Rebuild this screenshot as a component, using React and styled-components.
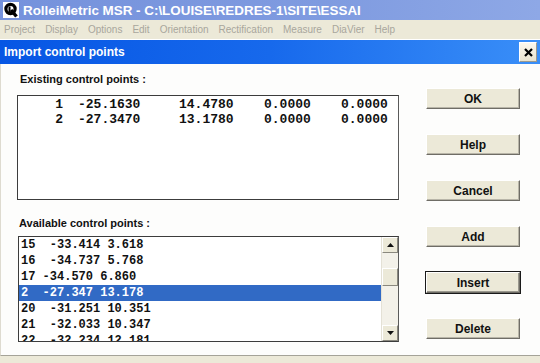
import styled, { createGlobalStyle } from 'styled-components'

const Global = createGlobalStyle`
	html, body {
		margin: 0;
		padding: 0;
		background: #ece9d8;
	}
	body {
		width: 540px;
		height: 363px;
		overflow: hidden;
	}
`

const Screen = styled.div`
	width: 540px;
	height: 363px;
	display: flex;
	flex-direction: column;
	font-family: "Liberation Sans", Arial, sans-serif;
	background: #ece9d8;
	overflow: hidden;
`

const AppTitle = styled.div`
	height: 20px;
	display: flex;
	align-items: center;
	gap: 4px;
	padding-left: 3px;
	background: linear-gradient(90deg, #7592dc 0%, #7f9be0 60%, #8ea8e6 100%);
	color: #fff;
	font-weight: bold;
	font-size: 13.4px;
`

const MenuBar = styled.div`
	height: 19px;
	display: flex;
	align-items: center;
	gap: 10px;
	padding-left: 4px;
	background: #ece9d8;
	color: #a8a69c;
	font-size: 10px;
`

const Gap = styled.div`
	height: 1px;
	background: #fff;
`

const DialogTitle = styled.div`
	height: 24px;
	display: flex;
	align-items: center;
	justify-content: space-between;
	padding: 0 3px 0 4px;
	background: linear-gradient(90deg, #0656e4 0%, #1769ec 50%, #3a8ff8 100%);
	color: #fff;
	font-weight: bold;
	font-size: 12px;
`

const CloseButton = styled.div`
	width: 16px;
	height: 18px;
	display: flex;
	align-items: center;
	justify-content: center;
	background: linear-gradient(180deg, #fbf8ee, #e9e3cf);
	border: 1px solid #fff;
	border-right-color: #9c9a8e;
	border-bottom-color: #9c9a8e;
`

const Body = styled.div`
	flex: 1;
	display: flex;
	background: #fdfdfc;
	border-left: 1px solid #dedbd0;
	border-bottom: 1px solid #a5a398;
	margin-bottom: 7px;
`

const LeftColumn = styled.div`
	width: 382px;
	margin-left: 16px;
	display: flex;
	flex-direction: column;
`

const Label = styled.div`
	height: 14px;
	line-height: 14px;
	margin-top: ${(p) => p.$top}px;
	padding-left: ${(p) => p.$indent}px;
	font-size: 11px;
	font-weight: bold;
	color: #111;
`

const ListBox = styled.div`
	box-sizing: border-box;
	height: ${(p) => p.$height}px;
	margin-top: ${(p) => p.$top}px;
	margin-left: ${(p) => p.$indent}px;
	border: 1px solid #3c3c3c;
	border-right-color: #5a5a5a;
	background: #fff;
	display: flex;
	overflow: hidden;
	font-family: "Liberation Mono", "Courier New", monospace;
	font-weight: bold;
	font-size: 12px;
	color: #111;
`

const Points = styled.div`
	padding-top: 1px;
	width: 100%;
`

const PointRow = styled.div`
	display: grid;
	grid-template-columns: 45px 101px 85px 77px 60px;
	height: 15px;
	line-height: 15px;
	font-size: 13px;
	white-space: pre;
`

const Cell = styled.span`
	text-align: ${(p) => (p.$right ? 'right' : 'left')};
	padding-left: ${(p) => (p.$right ? 0 : 15)}px;
`

const Entries = styled.div`
	flex: 1;
	display: flex;
	flex-direction: column;
`

const Entry = styled.div`
	height: 16px;
	line-height: 16px;
	padding-left: 2px;
	white-space: pre;
	background: ${(p) => (p.$selected ? '#316ac5' : 'transparent')};
	color: ${(p) => (p.$selected ? '#fff' : '#111')};
	flex-shrink: 0;
`

const ScrollBar = styled.div`
	width: 16px;
	display: flex;
	flex-direction: column;
	background: #f3f1e9;
	border-left: 1px solid #e4e1d6;
`

const ScrollArrow = styled.div`
	height: 16px;
	display: flex;
	align-items: center;
	justify-content: center;
	background: #ece9d8;
	border: 1px solid #fff;
	border-right-color: #8a887e;
	border-bottom-color: #8a887e;
	box-sizing: border-box;
`

const Track = styled.div`
	flex: 1;
	display: flex;
	flex-direction: column;
`

const Thumb = styled.div`
	height: 18px;
	margin-top: 15px;
	box-sizing: border-box;
	background: #ece9d8;
	border: 1px solid #fff;
	border-right-color: #8a887e;
	border-bottom-color: #8a887e;
`

const ButtonColumn = styled.div`
	margin-left: 27px;
	padding-top: 24px;
	display: flex;
	flex-direction: column;
	gap: 25px;
`

const Button = styled.div`
	box-sizing: border-box;
	width: 94px;
	height: 21px;
	display: flex;
	align-items: center;
	justify-content: center;
	background: #ece9d8;
	border: 1px solid #fff;
	border-right-color: #6f6d66;
	border-bottom-color: #6f6d66;
	box-shadow: ${(p) => (p.$default ? '0 0 0 1px #1a1a1a, inset -1px -1px 0 #9a988e' : 'inset -1px -1px 0 #b8b5a8')};
	font-size: 12px;
	font-weight: bold;
	color: #111;
`

const menus = ['Project', 'Display', 'Options', 'Edit', 'Orientation', 'Rectification', 'Measure', 'DiaVier', 'Help']

const existing = [
	['1', '-25.1630', '14.4780', '0.0000', '0.0000'],
	['2', '-27.3470', '13.1780', '0.0000', '0.0000'],
]

const available = [
	'15  -33.414 3.618',
	'16  -34.737 5.768',
	'17 -34.570 6.860',
	'2  -27.347 13.178',
	'20  -31.251 10.351',
	'21  -32.033 10.347',
	'22  -32.234 12.181',
]

function AppIcon() {
	return (
		<svg width='16' height='16' viewBox='0 0 16 16'>
			<rect width='16' height='16' fill='#fff' />
			<circle cx='7.5' cy='7' r='4.6' fill='none' stroke='#000' strokeWidth='3.2' />
			<path d='M8 8 L13.5 14.5' stroke='#000' strokeWidth='3.4' />
			<rect x='5.5' y='4.5' width='2' height='8' fill='#000' />
		</svg>
	)
}

function Arrow({ down }) {
	return (
		<svg width='7' height='4' viewBox='0 0 7 4'>
			<path d={down ? 'M0 0 H7 L3.5 4 Z' : 'M0 4 H7 L3.5 0 Z'} fill='#111' />
		</svg>
	)
}

export default function App() {
	return (
		<Screen>
			<Global />
			<AppTitle>
				<AppIcon />
				RolleiMetric MSR - C:\LOUISE\REDRES-1\SITE\ESSAI
			</AppTitle>
			<MenuBar>
				{menus.map((m) => (
					<span key={m}>{m}</span>
				))}
			</MenuBar>
			<Gap />
			<DialogTitle>
				Import control points
				<CloseButton>
					<svg width='9' height='9' viewBox='0 0 9 9'>
						<path d='M1 1 L8 8 M8 1 L1 8' stroke='#000' strokeWidth='2.2' />
					</svg>
				</CloseButton>
			</DialogTitle>
			<Body>
				<LeftColumn>
					<Label $top={8} $indent={3}>Existing control points :</Label>
					<ListBox $top={9} $indent={0} $height={105}>
						<Points>
							{existing.map((r) => (
								<PointRow key={r[0]}>
									<Cell $right>{r[0]}</Cell>
									<Cell>{r[1]}</Cell>
									<Cell>{r[2]}</Cell>
									<Cell>{r[3]}</Cell>
									<Cell>{r[4]}</Cell>
								</PointRow>
							))}
						</Points>
					</ListBox>
					<Label $top={16} $indent={2}>Available control points :</Label>
					<ListBox $top={6} $indent={1} $height={106}>
						<Entries>
							{available.map((t, i) => (
								<Entry key={t} $selected={i === 3}>{t}</Entry>
							))}
						</Entries>
						<ScrollBar>
							<ScrollArrow><Arrow /></ScrollArrow>
							<Track><Thumb /></Track>
							<ScrollArrow><Arrow down /></ScrollArrow>
						</ScrollBar>
					</ListBox>
				</LeftColumn>
				<ButtonColumn>
					<Button>OK</Button>
					<Button>Help</Button>
					<Button>Cancel</Button>
					<Button>Add</Button>
					<Button $default>Insert</Button>
					<Button>Delete</Button>
				</ButtonColumn>
			</Body>
		</Screen>
	)
}
